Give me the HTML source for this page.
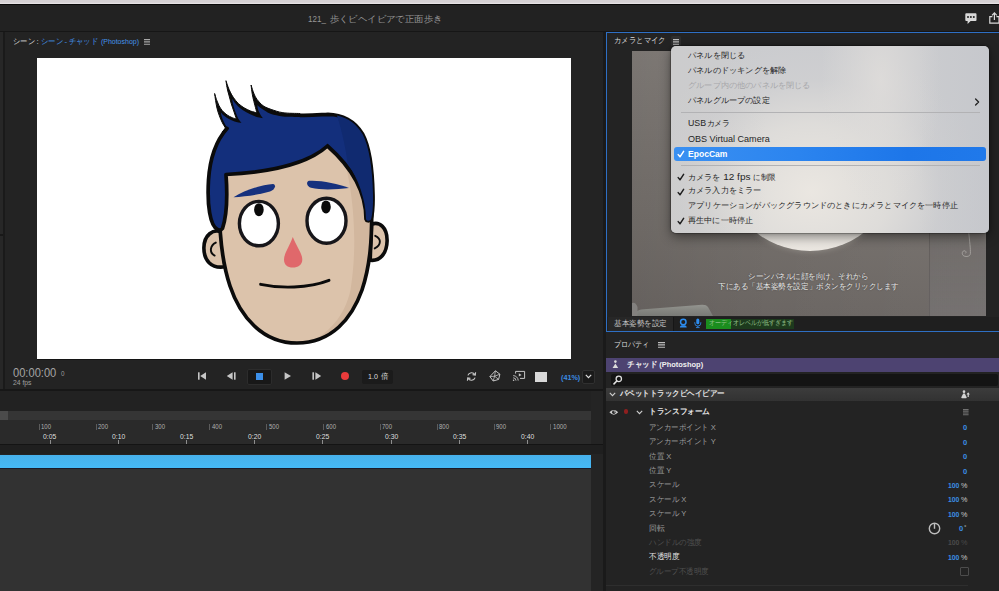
<!DOCTYPE html>
<html lang="ja">
<head>
<meta charset="utf-8">
<title>Character Animator</title>
<style>
html,body{margin:0;padding:0;}
body{width:999px;height:591px;overflow:hidden;background:#232323;position:relative;font-family:"Liberation Sans",sans-serif;color:#d0d0d0;font-size:8px;line-height:1;}
div,span{position:absolute;box-sizing:border-box;white-space:nowrap;}
svg{position:absolute;overflow:visible;}
svg.x{font-family:"Liberation Sans",sans-serif;}
</style>
</head>
<body>
<div style="left:0;top:0;width:999px;height:3.6px;background:linear-gradient(#d5d1d3 0%,#d5d1d3 55%,#ebe8ea 100%);"></div>
<div style="left:0;top:3.6px;width:999px;height:1.1px;background:#090909;"></div>
<div style="left:0;top:4.7px;width:999px;height:26.3px;background:#222222;"></div>
<div style="left:0;top:31px;width:999px;height:1px;background:#161616;"></div>
<svg class="x" style="left:307.5px;top:15.00px;" width="134.5" height="9.4"><text y="7.19"><tspan x="0.00" font-size="9.5" fill="#959595" textLength="17.9" lengthAdjust="spacingAndGlyphs">121_</tspan> <tspan x="21.50" font-size="9.4" fill="#959595" textLength="113" lengthAdjust="spacingAndGlyphs">歩くビヘイビアで正面歩き</tspan></text></svg>
<svg style="left:964.5px;top:12.8px" width="12" height="12" viewBox="0 0 12 12"><path d="M1.2 0.3 H10.6 Q11.5 0.3 11.5 1.2 V7 Q11.5 7.9 10.6 7.9 H5.6 L2.6 11 V7.9 H1.2 Q0.3 7.9 0.3 7 V1.2 Q0.3 0.3 1.2 0.3 Z" fill="#d9d9d9"/><circle cx="3" cy="4.1" r="1" fill="#222"/><circle cx="5.9" cy="4.1" r="1" fill="#222"/><circle cx="8.8" cy="4.1" r="1" fill="#222"/></svg>
<svg style="left:988.5px;top:12px" width="12" height="12" viewBox="0 0 12 12" fill="none" stroke="#d9d9d9" stroke-width="1.2"><path d="M3.4 4.6 H0.8 V11.2 H10 V4.6 H7.4"/><path d="M5.4 8 V1.2 M3 3.4 L5.4 0.9 L7.8 3.4"/></svg>
<div style="left:0;top:32px;width:2.5px;height:358px;background:#272727;"></div>
<div style="left:2.5px;top:32px;width:2.2px;height:358px;background:#1a1a1a;"></div>
<div style="left:0;top:234.3px;width:2.5px;height:1.6px;background:#181818;"></div>
<div style="left:37px;top:58px;width:534.2px;height:301px;background:#ffffff;box-shadow:0 1px 0 #141414;"></div>
<div style="left:0;top:389px;width:604px;height:2px;background:#171717;"></div>
<div style="left:603px;top:32px;width:3px;height:559px;background:#1a1a1a;"></div>
<svg class="x" style="left:12.7px;top:37.90px;" width="126.0" height="8"><text y="6.12"><tspan x="0.00" font-size="8" fill="#dadada" textLength="21.9" lengthAdjust="spacingAndGlyphs">シーン</tspan> <tspan x="23.50" font-size="8" fill="#dadada">:</tspan> <tspan x="27.90" font-size="8" fill="#4494ea" textLength="22.1" lengthAdjust="spacingAndGlyphs">シーン</tspan> <tspan x="51.60" font-size="8" fill="#4494ea">-</tspan> <tspan x="55.60" font-size="8" fill="#4494ea" textLength="29.6" lengthAdjust="spacingAndGlyphs">チャッド</tspan> <tspan x="87.90" font-size="8" fill="#4494ea" textLength="38.1" lengthAdjust="spacingAndGlyphs">(Photoshop)</tspan></text></svg>
<svg style="left:144px;top:39.2px" width="6" height="6" viewBox="0 0 6 6"><path d="M0 0.6H6M0 2.9H6M0 5.2H6" stroke="#a8a8a8" stroke-width="1.1"/></svg>
<svg id="face" style="left:0;top:0" width="999" height="591" viewBox="0 0 999 591">
  <defs><clipPath id="fc"><path id="facep" d="M219.5 200 C219 235 222 262 230 286 C240 316 262 343 297 343 C332 343 352 318 362 290 C370 266 372.5 240 371.5 200 C371 170 350 140 297 140 C240 140 220 170 219.5 200 Z"/></clipPath></defs>
  <!-- ears -->
  <path d="M221.5 232 C213 228.5 204.2 235 203.9 247.5 C203.6 260 211 269 225 266.8 Z" fill="#dcc3ab" stroke="#0b0b0b" stroke-width="3.6" stroke-linejoin="round"/>
  <path d="M215.8 242.6 C210 245.5 209 252.5 214.6 255.6" fill="none" stroke="#0b0b0b" stroke-width="1.9" stroke-linecap="round"/>
  <path d="M371.5 224.3 C379.5 221 387.4 227.5 387.1 241 C386.8 253.5 380 261.5 370.2 260.2 Z" fill="#dcc3ab" stroke="#0b0b0b" stroke-width="3.6" stroke-linejoin="round"/>
  <path d="M375.2 235.8 C381.5 238.5 381.5 245 374.7 248.4" fill="none" stroke="#0b0b0b" stroke-width="1.9" stroke-linecap="round"/>
  <!-- face -->
  <use href="#facep" fill="#dcc3ab"/>
  <g clip-path="url(#fc)"><path d="M338 140 C350 170 360 230 350.5 290 C344 320 324 338 300 346 L380 346 L380 140 Z" fill="#d2b79e"/></g>
  <use href="#facep" fill="none" stroke="#0b0b0b" stroke-width="3.7"/>
  <!-- hair -->
  <path d="M222.2 132.0 C222.8 131.4 225.0 128.8 225.5 128.1 C225.0 127.2 223.2 124.5 222.2 122.4 C221.2 120.4 220.2 118.2 219.4 115.8 C218.5 113.4 217.6 110.8 217.0 108.2 C216.4 105.7 216.0 103.1 215.6 100.6 C215.2 98.2 214.8 94.7 214.6 93.5 C215.0 94.6 215.8 97.7 216.5 99.7 C217.2 101.7 218.0 103.6 218.9 105.4 C219.8 107.2 220.9 109.0 222.2 110.6 C223.6 112.2 225.3 113.7 227.0 114.9 C228.6 116.0 230.6 117.0 232.2 117.7 C233.8 118.4 235.7 118.7 236.4 118.8 C236.0 117.7 234.9 114.6 234.1 112.0 C233.2 109.5 232.1 106.3 231.2 103.5 C230.4 100.6 229.6 97.6 228.9 95.0 C228.1 92.3 227.4 89.7 227.0 87.4 C226.5 85.0 226.2 81.8 226.0 80.7 C226.3 81.7 227.2 84.5 227.9 86.4 C228.6 88.3 229.3 90.2 230.3 92.1 C231.2 94.0 232.2 95.9 233.6 97.8 C234.9 99.7 236.6 101.8 238.3 103.5 C240.1 105.1 242.0 106.5 244.0 107.8 C246.1 109.0 248.5 110.2 250.7 111.1 C252.8 111.9 255.8 112.5 256.8 112.8 C256.5 111.5 255.6 107.9 254.9 105.4 C254.3 102.9 253.5 100.2 253.0 97.8 C252.5 95.4 252.1 93.3 251.8 91.2 C251.5 89.0 251.2 86.0 251.1 85.0 C251.4 86.0 252.3 89.2 253.0 91.2 C253.7 93.1 254.4 95.0 255.4 96.9 C256.4 98.7 257.8 100.5 259.2 102.1 C260.6 103.6 261.9 105.1 263.9 106.3 C265.9 107.5 268.0 108.3 271.1 109.4 C274.3 110.4 278.1 112.0 282.9 112.7 C287.7 113.4 297.1 113.4 299.9 113.5 L299.9 123.4 L230.7 137.6 Z" fill="#0b0b0b" stroke="#0b0b0b" stroke-width="1" stroke-linejoin="miter" stroke-miterlimit="8"/>
  <path d="M228.9 128.6 C228.4 128.1 227.0 127.1 226.0 125.8 C225.1 124.4 224.0 122.4 223.2 120.5 C222.4 118.7 221.7 116.2 221.3 114.9 C220.9 113.5 220.9 112.9 220.8 112.5 C221.3 113.0 222.8 114.7 224.1 115.8 C225.5 116.9 227.1 118.2 228.9 119.1 C230.6 120.1 232.4 120.8 234.5 121.5 C236.7 122.2 240.5 122.8 241.6 123.1 C241.1 122.4 239.4 120.5 238.3 118.7 C237.3 116.8 236.4 114.4 235.5 112.0 C234.6 109.6 233.7 106.6 233.1 104.4 C232.6 102.2 232.3 99.7 232.2 98.7 C232.7 99.5 234.1 101.9 235.5 103.5 C236.8 105.1 238.5 106.8 240.2 108.2 C242.0 109.6 243.9 110.8 245.9 112.0 C248.0 113.2 250.3 114.4 252.5 115.3 C254.8 116.3 257.4 117.0 259.2 117.5 C260.9 118.0 262.3 118.1 263.0 118.2 C262.6 117.6 261.4 116.2 260.6 114.9 C259.8 113.5 258.8 111.8 258.2 110.1 C257.7 108.5 257.4 105.8 257.3 104.9 C257.9 105.5 259.7 107.2 261.1 108.2 C262.5 109.3 264.1 110.3 265.8 111.3 C267.5 112.2 268.3 113.2 271.1 114.1 C274.0 115.0 278.1 116.0 282.9 116.5 C287.7 116.9 297.1 116.9 299.9 116.9 L300 115.3 C312 115.6 320 114.7 328 114.3 C342 114.5 355 121 362.5 134 C369 146 372.5 168 373 195 C373.2 205 372.6 214 371 219.5 C369 221.5 366.5 221 366 219 C366 198 357 172 327.5 146 C312 160 280 172 226 174.5 C227.5 195 227 215 222.5 228.5 C221 230.5 219 230.3 217.5 229.5 C210 226 207 205 208.5 180 C210 157 217.5 139 227 128.4 Z" fill="#132f7c"/>
  <path d="M300 115.3 C312 115.6 320 114.7 328 114.3 C342 114.5 355 121 362.5 134 C369 146 372.5 168 373 195 C373.2 205 372.6 214 371 219.5 C369 221.5 366.5 221 366 219 C366 198 357 172 327.5 146 C312 160 280 172 226 174.5 C227.5 195 227 215 222.5 228.5 C221 230.5 219 230.3 217.5 229.5 C210 226 207 205 208.5 180 C210 157 217.5 139 227 128.4" fill="none" stroke="#0b0b0b" stroke-width="3.7" stroke-linejoin="round" stroke-linecap="round"/>
  <path d="M327.5 143.6 L324.8 147.4 L330.4 147.6 Z" fill="#0b0b0b"/>
  <path d="M337 115.5 C343 135 346 150 347.5 163 C358 178 366 200 366 219 C366.5 221 369 221.5 371 219.5 C372.6 214 373.2 205 373 195 C372.5 168 369 146 362.5 134 C357 125 349 118 337 115.5 Z" fill="#102a70"/>
  <!-- brows -->
  <path d="M233.5 197.3 C245 190 262 184.5 273 184 C277 185 274.5 190 270 191.5 C258 195 245 196.5 233.5 197.3 Z" fill="#16317e"/>
  <path d="M349 188 C338 183.5 320 180 309 180.8 C305.5 182 307 186.5 311 187.8 C322 190.5 337 189.5 349 188 Z" fill="#16317e"/>
  <!-- eyes -->
  <ellipse cx="258.9" cy="223.6" rx="19.5" ry="22.2" fill="#ffffff" stroke="#17161a" stroke-width="3.4"/>
  <ellipse cx="326.5" cy="220.7" rx="19.5" ry="22.5" fill="#ffffff" stroke="#17161a" stroke-width="3.4"/>
  <ellipse cx="258.9" cy="209.7" rx="4.8" ry="6.5" fill="#0a0a0a"/>
  <ellipse cx="326" cy="206.9" rx="4.8" ry="6.5" fill="#0a0a0a"/>
  <!-- nose -->
  <path d="M292.8 237 C297 247 302.3 254 302.3 259.5 C302.3 265 298 267.5 292.8 267.5 C287.5 267.5 284 265 284 259.5 C284 254 289 247 292.8 237 Z" fill="#e0686b"/>
  <!-- mouth -->
  <path d="M260.6 284.3 C280 288.5 308 288.5 329 280.3" fill="none" stroke="#0b0b0b" stroke-width="2.9" stroke-linecap="round"/>
</svg>
<svg class="x" style="left:12.9px;top:366.90px;" width="43.3" height="12.6"><text y="10.39" font-size="12.6" fill="#a4a4a4" textLength="43.3" lengthAdjust="spacingAndGlyphs" x="0">00:00:00</text></svg>
<svg class="x" style="left:61.4px;top:371.45px;" width="4.4" height="6.3"><text y="5.20" font-size="6.3" fill="#9c9c9c" x="0">0</text></svg>
<svg class="x" style="left:13px;top:379.10px;" width="18.5" height="7.4"><text y="6.10" font-size="7.4" fill="#a0a0a0" textLength="18.5" lengthAdjust="spacingAndGlyphs" x="0">24 fps</text></svg>
<svg style="left:197px;top:371px" width="10" height="10" viewBox="0 0 10 10"><rect x="1" y="1.3" width="1.6" height="7.4" fill="#c6c6c6"/><path d="M9 1.3 L9 8.7 L3.2 5 Z" fill="#c6c6c6"/></svg>
<svg style="left:226px;top:371px" width="11" height="10" viewBox="0 0 11 10"><path d="M6.6 1.3 L6.6 8.7 L0.8 5 Z" fill="#c6c6c6"/><rect x="8" y="1.3" width="1.6" height="7.4" fill="#c6c6c6"/></svg>
<div style="left:247px;top:368.5px;width:25px;height:16.5px;background:#181818;border-radius:2px;border:1px solid #2c2c2c;"></div>
<div style="left:255.5px;top:372.5px;width:7px;height:7px;background:#3b8fe9;"></div>
<svg style="left:283px;top:371px" width="10" height="10" viewBox="0 0 10 10"><path d="M1.6 1.2 L1.6 8.8 L8 5 Z" fill="#c6c6c6"/></svg>
<svg style="left:311px;top:371px" width="11" height="10" viewBox="0 0 11 10"><rect x="1.4" y="1.3" width="1.6" height="7.4" fill="#c6c6c6"/><path d="M4.4 1.3 L4.4 8.7 L10.2 5 Z" fill="#c6c6c6"/></svg>
<div style="left:341.3px;top:372.3px;width:8px;height:8px;border-radius:50%;background:#ea3b3b;"></div>
<div style="left:362px;top:370px;width:31px;height:13.5px;background:#1b1b1b;border-radius:2px;"></div>
<svg class="x" style="left:367.6px;top:372.80px;" width="20.1" height="8"><text y="6.12"><tspan x="0.00" font-size="8" fill="#dcdcdc" textLength="9.9" lengthAdjust="spacingAndGlyphs">1.0</tspan> <tspan x="12.70" font-size="7.6" fill="#dcdcdc" textLength="7.4" lengthAdjust="spacingAndGlyphs">倍</tspan></text></svg>
<svg style="left:466px;top:371px" width="11" height="11" viewBox="0 0 11 11" fill="none" stroke="#c6c6c6" stroke-width="1.15"><path d="M8.9 3.6 A3.9 3.9 0 0 0 1.9 4.4"/><path d="M2.1 7.4 A3.9 3.9 0 0 0 9.1 6.6"/><path d="M9.6 1.2 L9.3 4 L6.6 3.6" stroke-width="1.1"/><path d="M1.4 9.8 L1.7 7 L4.4 7.4" stroke-width="1.1"/></svg>
<svg style="left:489px;top:370px" width="12" height="12" viewBox="0 0 12 12" fill="none" stroke="#c6c6c6" stroke-width="1"><path d="M6.4 0.8 L10.9 4.2 L9.6 9.4 L4.2 11 L0.9 6.6 Z"/><path d="M6.4 0.8 L5.6 6.2 L0.9 6.6 M5.6 6.2 L10.9 4.2 M5.6 6.2 L4.2 11 M5.6 6.2 L9.6 9.4" stroke-width="0.8"/></svg>
<svg style="left:512px;top:370px" width="14" height="12" viewBox="0 0 14 12" fill="none" stroke="#c6c6c6" stroke-width="1"><path d="M3.6 3.6 V1.4 H12.6 V8.4 H8"/><path d="M6.8 3.2 L9.6 4.9 L6.8 6.6 Z" fill="#c6c6c6" stroke="none"/><path d="M1.2 5.6 A5 5 0 0 1 6.2 10.6" stroke-width="0.9"/><path d="M1.2 7.8 A2.8 2.8 0 0 1 4 10.6" stroke-width="0.9"/><circle cx="1.6" cy="10.2" r="0.8" fill="#c6c6c6" stroke="none"/></svg>
<div style="left:535px;top:371.5px;width:12px;height:10px;background:#d9d9d9;"></div>
<div style="left:581.5px;top:370px;width:13px;height:13.5px;background:#1a1a1a;border:1px solid #303030;border-radius:2px;"></div>
<svg style="left:584.5px;top:374px" width="7" height="5" viewBox="0 0 7 5" fill="none" stroke="#e0e0e0" stroke-width="1.2"><path d="M0.8 0.9 L3.5 3.6 L6.2 0.9"/></svg>
<svg class="x" style="left:560.7px;top:372.80px;" width="19.2" height="8"><text y="6.60" font-size="8" fill="#3b8de3" font-weight="bold" textLength="19.2" lengthAdjust="spacingAndGlyphs" x="0">(41%)</text></svg>
<div style="left:0;top:391px;width:603px;height:20px;background:#222222;"></div>
<div style="left:0;top:410.5px;width:591px;height:9.5px;background:#353535;"></div>
<div style="left:0;top:410.5px;width:8px;height:9.5px;background:#4b4b4b;"></div>
<div style="left:0;top:420px;width:591px;height:24.5px;background:#2a2a2a;"></div>
<div style="left:591px;top:391px;width:12px;height:200px;background:#242424;"></div>
<div style="left:38.7px;top:424px;width:1px;height:5.5px;background:#5c5c5c;"></div>
<svg class="x" style="left:41.3px;top:424.00px;" width="10" height="6.4"><text y="5.28" font-size="6.4" fill="#b0b0b0" textLength="10" lengthAdjust="spacingAndGlyphs" x="0">100</text></svg>
<div style="left:95.5px;top:424px;width:1px;height:5.5px;background:#5c5c5c;"></div>
<svg class="x" style="left:98.1px;top:424.00px;" width="10" height="6.4"><text y="5.28" font-size="6.4" fill="#b0b0b0" textLength="10" lengthAdjust="spacingAndGlyphs" x="0">200</text></svg>
<div style="left:152.4px;top:424px;width:1px;height:5.5px;background:#5c5c5c;"></div>
<svg class="x" style="left:155.0px;top:424.00px;" width="10" height="6.4"><text y="5.28" font-size="6.4" fill="#b0b0b0" textLength="10" lengthAdjust="spacingAndGlyphs" x="0">300</text></svg>
<div style="left:209.2px;top:424px;width:1px;height:5.5px;background:#5c5c5c;"></div>
<svg class="x" style="left:211.8px;top:424.00px;" width="10" height="6.4"><text y="5.28" font-size="6.4" fill="#b0b0b0" textLength="10" lengthAdjust="spacingAndGlyphs" x="0">400</text></svg>
<div style="left:266.1px;top:424px;width:1px;height:5.5px;background:#5c5c5c;"></div>
<svg class="x" style="left:268.7px;top:424.00px;" width="10" height="6.4"><text y="5.28" font-size="6.4" fill="#b0b0b0" textLength="10" lengthAdjust="spacingAndGlyphs" x="0">500</text></svg>
<div style="left:322.9px;top:424px;width:1px;height:5.5px;background:#5c5c5c;"></div>
<svg class="x" style="left:325.5px;top:424.00px;" width="10" height="6.4"><text y="5.28" font-size="6.4" fill="#b0b0b0" textLength="10" lengthAdjust="spacingAndGlyphs" x="0">600</text></svg>
<div style="left:379.8px;top:424px;width:1px;height:5.5px;background:#5c5c5c;"></div>
<svg class="x" style="left:382.4px;top:424.00px;" width="10" height="6.4"><text y="5.28" font-size="6.4" fill="#b0b0b0" textLength="10" lengthAdjust="spacingAndGlyphs" x="0">700</text></svg>
<div style="left:436.6px;top:424px;width:1px;height:5.5px;background:#5c5c5c;"></div>
<svg class="x" style="left:439.2px;top:424.00px;" width="10" height="6.4"><text y="5.28" font-size="6.4" fill="#b0b0b0" textLength="10" lengthAdjust="spacingAndGlyphs" x="0">800</text></svg>
<div style="left:493.5px;top:424px;width:1px;height:5.5px;background:#5c5c5c;"></div>
<svg class="x" style="left:496.1px;top:424.00px;" width="10" height="6.4"><text y="5.28" font-size="6.4" fill="#b0b0b0" textLength="10" lengthAdjust="spacingAndGlyphs" x="0">900</text></svg>
<div style="left:550.3px;top:424px;width:1px;height:5.5px;background:#5c5c5c;"></div>
<svg class="x" style="left:552.9px;top:424.00px;" width="13.6" height="6.4"><text y="5.28" font-size="6.4" fill="#b0b0b0" textLength="13.6" lengthAdjust="spacingAndGlyphs" x="0">1000</text></svg>
<div style="left:49.5px;top:440px;width:1px;height:4px;background:#8e8e8e;"></div>
<svg class="x" style="left:43.4px;top:432.70px;text-shadow:0 0 1px #000;" width="13.2" height="7.6"><text y="6.27" font-size="7.6" fill="#e6e6e6" textLength="13.2" lengthAdjust="spacingAndGlyphs" x="0">0:05</text></svg>
<div style="left:117.7px;top:440px;width:1px;height:4px;background:#8e8e8e;"></div>
<svg class="x" style="left:111.6px;top:432.70px;text-shadow:0 0 1px #000;" width="13.2" height="7.6"><text y="6.27" font-size="7.6" fill="#e6e6e6" textLength="13.2" lengthAdjust="spacingAndGlyphs" x="0">0:10</text></svg>
<div style="left:186.0px;top:440px;width:1px;height:4px;background:#8e8e8e;"></div>
<svg class="x" style="left:179.9px;top:432.70px;text-shadow:0 0 1px #000;" width="13.2" height="7.6"><text y="6.27" font-size="7.6" fill="#e6e6e6" textLength="13.2" lengthAdjust="spacingAndGlyphs" x="0">0:15</text></svg>
<div style="left:254.2px;top:440px;width:1px;height:4px;background:#8e8e8e;"></div>
<svg class="x" style="left:248.1px;top:432.70px;text-shadow:0 0 1px #000;" width="13.2" height="7.6"><text y="6.27" font-size="7.6" fill="#e6e6e6" textLength="13.2" lengthAdjust="spacingAndGlyphs" x="0">0:20</text></svg>
<div style="left:322.4px;top:440px;width:1px;height:4px;background:#8e8e8e;"></div>
<svg class="x" style="left:316.3px;top:432.70px;text-shadow:0 0 1px #000;" width="13.2" height="7.6"><text y="6.27" font-size="7.6" fill="#e6e6e6" textLength="13.2" lengthAdjust="spacingAndGlyphs" x="0">0:25</text></svg>
<div style="left:390.6px;top:440px;width:1px;height:4px;background:#8e8e8e;"></div>
<svg class="x" style="left:384.5px;top:432.70px;text-shadow:0 0 1px #000;" width="13.2" height="7.6"><text y="6.27" font-size="7.6" fill="#e6e6e6" textLength="13.2" lengthAdjust="spacingAndGlyphs" x="0">0:30</text></svg>
<div style="left:458.8px;top:440px;width:1px;height:4px;background:#8e8e8e;"></div>
<svg class="x" style="left:452.7px;top:432.70px;text-shadow:0 0 1px #000;" width="13.2" height="7.6"><text y="6.27" font-size="7.6" fill="#e6e6e6" textLength="13.2" lengthAdjust="spacingAndGlyphs" x="0">0:35</text></svg>
<div style="left:527.1px;top:440px;width:1px;height:4px;background:#8e8e8e;"></div>
<svg class="x" style="left:521.0px;top:432.70px;text-shadow:0 0 1px #000;" width="13.2" height="7.6"><text y="6.27" font-size="7.6" fill="#e6e6e6" textLength="13.2" lengthAdjust="spacingAndGlyphs" x="0">0:40</text></svg>
<div style="left:0;top:444px;width:603px;height:1.2px;background:#141414;"></div>
<div style="left:0;top:445.2px;width:603px;height:9.3px;background:#1f1f1f;"></div>
<div style="left:0;top:454.5px;width:591px;height:14px;background:linear-gradient(#47b0ea,#45baf8);"></div>
<div style="left:0;top:468.5px;width:591px;height:123px;background:#323232;"></div>
<div style="left:0;top:468px;width:591px;height:1px;background:#1a1a2a;"></div>
<div style="left:606px;top:32px;width:393px;height:300px;background:#232323;border:1.9px solid #2e6fc4;border-right:none;"></div>
<div style="left:670.5px;top:36px;width:10px;height:10px;background:#2e2e2e;border-radius:1.5px;"></div>
<svg style="left:673px;top:38.5px" width="6" height="6" viewBox="0 0 6 6"><path d="M0 0.6H6M0 2.9H6M0 5.2H6" stroke="#bdbdbd" stroke-width="1.1"/></svg>
<div style="left:632px;top:51px;width:353.5px;height:265px;overflow:hidden;background:linear-gradient(180deg,#827d79 0%,#7a7571 35%,#746f6b 65%,#6b6663 100%);">
  <div style="left:0;top:0;width:353.5px;height:265px;background:linear-gradient(90deg,rgba(0,0,0,0.06) 0%,rgba(0,0,0,0) 40%,rgba(255,255,255,0.03) 100%);"></div>
  <div style="left:296.5px;top:0;width:57px;height:265px;background:linear-gradient(180deg,rgba(60,62,72,0.10) 0%,rgba(60,62,72,0.08) 70%,rgba(160,165,180,0.12) 100%);border-left:1px solid rgba(40,36,34,0.18);"></div>
  <div style="left:90px;top:23.5px;width:176px;height:176px;border-radius:50%;background:radial-gradient(circle at 50% 55%,#f1eee9 0%,#e9e5df 70%,#dcd7d0 100%);box-shadow:0 0 6px rgba(255,250,240,0.25);"></div>
  <svg style="left:0;top:0" width="354" height="265" viewBox="0 0 354 265">
    <defs><linearGradient id="fg" x1="0" y1="0" x2="0" y2="1"><stop offset="0" stop-color="#9b9d98"/><stop offset="0.45" stop-color="#8b8d88"/><stop offset="1" stop-color="#7c7e7a"/></linearGradient></defs>
    <path d="M0 252 Q3.5 250.5 5.5 256 V265 H0 Z" fill="#8b8a87" opacity=".8"/>
    <path d="M5 260.5 Q6 258.8 12 258.2 L70 253.8 Q74.5 253.6 76 256 L81 265 H5 Z" fill="url(#fg)" opacity=".85"/>
    <path d="M336.8 182 C337.6 190 338.6 198 338.4 202.5 C338.2 205.5 334.5 206 332 205 C329.8 204 329.6 200.5 332 199.8 C334 199.4 334.6 201.6 333.4 202.4" fill="none" stroke="#b3b0ac" stroke-width="0.9" opacity=".8"/>
  </svg>
</div>
<svg class="x" style="left:614px;top:37.20px;" width="51.7" height="8"><text y="6.12" font-size="8" fill="#dadada" textLength="51.7" lengthAdjust="spacingAndGlyphs" x="0">カメラとマイク</text></svg>
<svg class="x" style="left:748.4px;top:273.00px;text-shadow:0 0 1.5px rgba(0,0,0,.6);" width="120.4" height="8"><text y="6.12" font-size="8" fill="#ececec" textLength="120.4" lengthAdjust="spacingAndGlyphs" x="0">シーンパネルに顔を向け、それから</text></svg>
<svg class="x" style="left:718.1px;top:283.40px;text-shadow:0 0 1.5px rgba(0,0,0,.6);" width="181" height="8"><text y="6.12" font-size="8" fill="#ececec" textLength="181" lengthAdjust="spacingAndGlyphs" x="0">下にある「基本姿勢を設定」ボタンをクリックします</text></svg>
<div style="left:607.4px;top:316.5px;width:391.6px;height:14px;background:#1f1f1f;"></div>
<div style="left:608px;top:317px;width:66px;height:13.5px;background:#272727;border-right:1px solid #161616;"></div>
<svg style="left:678.5px;top:318.4px" width="8.6" height="10.3" viewBox="0 0 10 12"><circle cx="5" cy="4.6" r="3.2" fill="none" stroke="#2d8df0" stroke-width="1.7"/><path d="M1 11.2 Q1 8.6 3.2 8.4 H6.8 Q9 8.6 9 11.2 Z" fill="#2d8df0"/></svg>
<svg style="left:693.8px;top:318.4px" width="7.6" height="10.1" viewBox="0 0 9 12"><rect x="2.7" y="0.5" width="3.6" height="7" rx="1.8" fill="#2d8df0"/><path d="M0.9 5 V6 A3.6 3.6 0 0 0 8.1 6 V5" fill="none" stroke="#2d8df0" stroke-width="1"/><path d="M4.5 9.6 V11.4 M2.3 11.4 H6.7" stroke="#2d8df0" stroke-width="1"/></svg>
<div style="left:706px;top:319px;width:88px;height:9.8px;background:#1d3a1d;"></div>
<div style="left:706px;top:319px;width:25px;height:9.8px;background:#1b8d1e;"></div>
<svg class="x" style="left:614px;top:320.00px;" width="53" height="8"><text y="6.12" font-size="8" fill="#c4c4c4" textLength="53" lengthAdjust="spacingAndGlyphs" x="0">基本姿勢を設定</text></svg>
<svg class="x" style="left:709.3px;top:319.80px;" width="84.5" height="7"><text y="5.36" font-size="7" fill="#8fbf86" textLength="84.5" lengthAdjust="spacingAndGlyphs" x="0">オーディオレベルが低すぎます</text></svg>
<div style="left:606px;top:332.4px;width:393px;height:259px;background:#232323;"></div>
<svg style="left:657.5px;top:341.5px" width="7" height="6" viewBox="0 0 7 6"><path d="M0 0.6H7M0 2.9H7M0 5.2H7" stroke="#bdbdbd" stroke-width="1.1"/></svg>
<div style="left:606px;top:358px;width:393px;height:14.2px;background:#4d4371;"></div>
<svg style="left:612.4px;top:360px" width="6.8" height="8.5" viewBox="0 0 8 10"><circle cx="4" cy="1.9" r="1.5" fill="#dcdcdc"/><path d="M4 4 L7.3 9.4 H0.7 Z" fill="#dcdcdc"/></svg>
<div style="left:610.5px;top:373.6px;width:387.5px;height:12.4px;background:#141414;border-radius:2px;"></div>
<svg style="left:613px;top:375px" width="10" height="10" viewBox="0 0 10 10" fill="none" stroke="#e0e0e0"><circle cx="5.8" cy="3.9" r="2.7" stroke-width="1.3"/><path d="M3.8 6 L1 8.9" stroke-width="1.6" stroke-linecap="round"/></svg>
<div style="left:606px;top:387.8px;width:393px;height:13px;background:linear-gradient(#3c3c3c,#323232);"></div>
<svg style="left:608.6px;top:392px" width="7" height="5" viewBox="0 0 7 5" fill="none" stroke="#d0d0d0" stroke-width="1.1"><path d="M0.8 0.9 L3.5 3.6 L6.2 0.9"/></svg>
<svg style="left:961px;top:389.5px" width="9" height="9" viewBox="0 0 9 9"><circle cx="3" cy="1.7" r="1.35" fill="#d4d4d4"/><path d="M3 3 Q4 3.6 5.7 7.3 Q5.9 8.3 4.9 8.3 H1.1 Q0.1 8.3 0.3 7.3 Q2 3.6 3 3 Z" fill="#d4d4d4"/><path d="M7.2 6.9 V3.2" stroke="#d4d4d4" stroke-width="1.2" fill="none"/><path d="M5.5 4.5 L7.2 2.2 L8.9 4.5 Z" fill="#d4d4d4"/></svg>
<svg style="left:608.8px;top:409px" width="9.6" height="6.7" viewBox="0 0 10 7"><path d="M0.4 3.5 Q5 -1.6 9.6 3.5 Q5 8.6 0.4 3.5 Z" fill="#cdcdcd"/><circle cx="5" cy="3.5" r="1.8" fill="#232323"/><circle cx="5.6" cy="3" r="0.7" fill="#cdcdcd"/></svg>
<div style="left:623.6px;top:409.3px;width:4.4px;height:4.4px;border-radius:50%;background:#8f1f1f;"></div>
<svg style="left:636px;top:410px" width="7" height="5" viewBox="0 0 7 5" fill="none" stroke="#d0d0d0" stroke-width="1.1"><path d="M0.8 0.9 L3.5 3.6 L6.2 0.9"/></svg>
<svg style="left:962.7px;top:409.3px" width="5.6" height="6.4" viewBox="0 0 5.6 6.4"><path d="M0 0.6H5.6M0 2.3H5.6M0 4H5.6M0 5.7H5.6" stroke="#727272" stroke-width="1.1"/></svg>
<svg class="x" style="left:614.2px;top:340.90px;" width="35.5" height="8"><text y="6.12" font-size="8" fill="#dadada" textLength="35.5" lengthAdjust="spacingAndGlyphs" x="0">プロパティ</text></svg>
<svg class="x" style="left:627.4px;top:361.30px;" width="76.2" height="8"><text y="6.12"><tspan x="0.00" font-size="8" fill="#f0f0f0" font-weight="bold" textLength="30" lengthAdjust="spacingAndGlyphs">チャッド</tspan> <tspan x="32.20" font-size="8" fill="#f0f0f0" font-weight="bold" textLength="44" lengthAdjust="spacingAndGlyphs">(Photoshop)</tspan></text></svg>
<svg class="x" style="left:620.3px;top:390.30px;" width="104.6" height="8"><text y="6.12" font-size="8" fill="#e6e6e6" font-weight="bold" textLength="104.6" lengthAdjust="spacingAndGlyphs" x="0">パペットトラックビヘイビアー</text></svg>
<svg class="x" style="left:648.6px;top:408.30px;" width="61" height="8"><text y="6.12" font-size="8" fill="#e8e8e8" font-weight="bold" textLength="61" lengthAdjust="spacingAndGlyphs" x="0">トランスフォーム</text></svg>
<svg class="x" style="left:649.3px;top:423.90px;" width="67.0" height="8"><text y="6.12"><tspan x="0.00" font-size="8" fill="#9e9e9e" textLength="59.5" lengthAdjust="spacingAndGlyphs">アンカーポイント</tspan> <tspan x="61.70" font-size="7.6" fill="#9e9e9e">X</tspan></text></svg>
<svg class="x" style="left:963.2px;top:424.45px;" width="4.2" height="7.5"><text y="6.19" font-size="7.5" fill="#3b8de3" font-weight="bold" textLength="4.2" lengthAdjust="spacingAndGlyphs" x="0">0</text></svg>
<svg class="x" style="left:649.3px;top:438.30px;" width="67.0" height="8"><text y="6.12"><tspan x="0.00" font-size="8" fill="#9e9e9e" textLength="59.5" lengthAdjust="spacingAndGlyphs">アンカーポイント</tspan> <tspan x="61.70" font-size="7.6" fill="#9e9e9e">Y</tspan></text></svg>
<svg class="x" style="left:963.2px;top:438.85px;" width="4.2" height="7.5"><text y="6.19" font-size="7.5" fill="#3b8de3" font-weight="bold" textLength="4.2" lengthAdjust="spacingAndGlyphs" x="0">0</text></svg>
<svg class="x" style="left:649.3px;top:452.60px;" width="22.5" height="8"><text y="6.12"><tspan x="0.00" font-size="8" fill="#9e9e9e" textLength="15" lengthAdjust="spacingAndGlyphs">位置</tspan> <tspan x="17.20" font-size="7.6" fill="#9e9e9e">X</tspan></text></svg>
<svg class="x" style="left:963.2px;top:453.15px;" width="4.2" height="7.5"><text y="6.19" font-size="7.5" fill="#3b8de3" font-weight="bold" textLength="4.2" lengthAdjust="spacingAndGlyphs" x="0">0</text></svg>
<svg class="x" style="left:649.3px;top:467.00px;" width="22.5" height="8"><text y="6.12"><tspan x="0.00" font-size="8" fill="#9e9e9e" textLength="15" lengthAdjust="spacingAndGlyphs">位置</tspan> <tspan x="17.20" font-size="7.6" fill="#9e9e9e">Y</tspan></text></svg>
<svg class="x" style="left:963.2px;top:467.55px;" width="4.2" height="7.5"><text y="6.19" font-size="7.5" fill="#3b8de3" font-weight="bold" textLength="4.2" lengthAdjust="spacingAndGlyphs" x="0">0</text></svg>
<svg class="x" style="left:649.3px;top:481.40px;" width="30.0" height="8"><text y="6.12"><tspan x="0.00" font-size="8" fill="#9e9e9e" textLength="30" lengthAdjust="spacingAndGlyphs">スケール</tspan></text></svg>
<svg class="x" style="left:948.2px;top:481.95px;" width="19.3" height="7.5"><text y="6.19"><tspan x="0.00" font-size="7.5" fill="#3b8de3" font-weight="bold" textLength="11.4" lengthAdjust="spacingAndGlyphs">100</tspan> <tspan x="12.90" font-size="7.5" fill="#c8c8c8" textLength="6.4" lengthAdjust="spacingAndGlyphs">%</tspan></text></svg>
<svg class="x" style="left:649.3px;top:495.80px;" width="37.5" height="8"><text y="6.12"><tspan x="0.00" font-size="8" fill="#9e9e9e" textLength="30" lengthAdjust="spacingAndGlyphs">スケール</tspan> <tspan x="32.20" font-size="7.6" fill="#9e9e9e">X</tspan></text></svg>
<svg class="x" style="left:948.2px;top:496.35px;" width="19.3" height="7.5"><text y="6.19"><tspan x="0.00" font-size="7.5" fill="#3b8de3" font-weight="bold" textLength="11.4" lengthAdjust="spacingAndGlyphs">100</tspan> <tspan x="12.90" font-size="7.5" fill="#c8c8c8" textLength="6.4" lengthAdjust="spacingAndGlyphs">%</tspan></text></svg>
<svg class="x" style="left:649.3px;top:510.10px;" width="37.5" height="8"><text y="6.12"><tspan x="0.00" font-size="8" fill="#9e9e9e" textLength="30" lengthAdjust="spacingAndGlyphs">スケール</tspan> <tspan x="32.20" font-size="7.6" fill="#9e9e9e">Y</tspan></text></svg>
<svg class="x" style="left:948.2px;top:510.65px;" width="19.3" height="7.5"><text y="6.19"><tspan x="0.00" font-size="7.5" fill="#3b8de3" font-weight="bold" textLength="11.4" lengthAdjust="spacingAndGlyphs">100</tspan> <tspan x="12.90" font-size="7.5" fill="#c8c8c8" textLength="6.4" lengthAdjust="spacingAndGlyphs">%</tspan></text></svg>
<svg class="x" style="left:649.3px;top:524.50px;" width="15.6" height="8"><text y="6.12"><tspan x="0.00" font-size="8" fill="#9e9e9e" textLength="15.6" lengthAdjust="spacingAndGlyphs">回転</tspan></text></svg>
<svg class="x" style="left:959.3px;top:525.05px;" width="4.2" height="7.5"><text y="6.19" font-size="7.5" fill="#3b8de3" font-weight="bold" textLength="4.2" lengthAdjust="spacingAndGlyphs" x="0">0</text></svg>
<svg class="x" style="left:964.3px;top:524.00px;" width="4.2" height="6"><text y="4.95" font-size="6" fill="#c8c8c8" x="0">°</text></svg>
<svg class="x" style="left:649.3px;top:538.90px;" width="52.7" height="8"><text y="6.12"><tspan x="0.00" font-size="8" fill="#505050" textLength="52.7" lengthAdjust="spacingAndGlyphs">ハンドルの強度</tspan></text></svg>
<svg class="x" style="left:948.2px;top:539.45px;" width="19.3" height="7.5"><text y="6.19"><tspan x="0.00" font-size="7.5" fill="#4a4a4a" font-weight="bold" textLength="11.4" lengthAdjust="spacingAndGlyphs">100</tspan> <tspan x="12.90" font-size="7.5" fill="#4a4a4a" textLength="6.4" lengthAdjust="spacingAndGlyphs">%</tspan></text></svg>
<svg class="x" style="left:649.3px;top:553.20px;" width="30.4" height="8"><text y="6.12"><tspan x="0.00" font-size="8" fill="#e2e2e2" textLength="30.4" lengthAdjust="spacingAndGlyphs">不透明度</tspan></text></svg>
<svg class="x" style="left:948.2px;top:553.75px;" width="19.3" height="7.5"><text y="6.19"><tspan x="0.00" font-size="7.5" fill="#3b8de3" font-weight="bold" textLength="11.4" lengthAdjust="spacingAndGlyphs">100</tspan> <tspan x="12.90" font-size="7.5" fill="#c8c8c8" textLength="6.4" lengthAdjust="spacingAndGlyphs">%</tspan></text></svg>
<svg class="x" style="left:649.3px;top:567.60px;" width="59.9" height="8"><text y="6.12"><tspan x="0.00" font-size="8" fill="#505050" textLength="59.9" lengthAdjust="spacingAndGlyphs">グループ不透明度</tspan></text></svg>
<svg style="left:927.5px;top:522.0px" width="13" height="13" viewBox="0 0 13 13" fill="none" stroke="#bdbdbd" stroke-width="1.4"><circle cx="6.5" cy="6.5" r="5.2"/><path d="M6.5 6.8 V2"/></svg>
<div style="left:959.5px;top:567.1px;width:9px;height:9px;border:1px solid #4c4c4c;border-radius:1px;"></div>
<div style="left:606px;top:585.3px;width:362px;height:1px;background:#2e2e2e;"></div>
<div style="left:670.7px;top:45.5px;width:318.8px;height:187px;border-radius:5px;background:#cbcccf;box-shadow:0 0 0 0.5px rgba(0,0,0,0.35),0 4px 12px rgba(0,0,0,0.45),0 0 3px rgba(0,0,0,0.3);overflow:hidden;">
  <div style="left:0;top:0;width:100%;height:100%;background:radial-gradient(ellipse 175px 150px at 44% 78%,rgba(236,232,226,0.95) 0%,rgba(230,227,222,0.7) 45%,rgba(214,213,213,0.3) 75%,rgba(203,204,207,0) 100%);"></div>
  <div style="left:0;top:0;width:100%;height:100%;background:radial-gradient(ellipse 60px 130px at 66% 18%,rgba(226,223,220,0.75) 0%,rgba(222,220,218,0.4) 55%,rgba(210,210,211,0) 100%);"></div>
  <div style="left:0;top:0;width:100%;height:100%;background:linear-gradient(90deg,rgba(205,204,203,0.5) 0%,rgba(205,204,203,0) 30%,rgba(196,198,203,0) 78%,rgba(196,198,203,0.7) 100%);"></div>
</div>
<div style="left:680.5px;top:112.3px;width:299.5px;height:1px;background:#b2b2b4;"></div>
<div style="left:680.5px;top:165px;width:299.5px;height:1px;background:#b2b2b4;"></div>
<div style="left:674.2px;top:146.6px;width:312px;height:14.8px;border-radius:3px;background:linear-gradient(90deg,#3a90f2 0%,#2b84ef 40%,#1d76e9 75%,#2079ea 100%);"></div>
<svg style="left:973.5px;top:97.5px" width="6" height="8" viewBox="0 0 6 8" fill="none" stroke="#222" stroke-width="1.3" stroke-linecap="round" stroke-linejoin="round"><path d="M1.6 1 L4.6 4 L1.6 7"/></svg>
<svg class="x" style="left:687.7px;top:51.90px;" width="57.2" height="8.2"><text y="6.27" font-size="8.2" fill="#252525" textLength="57.2" lengthAdjust="spacingAndGlyphs" x="0">パネルを閉じる</text></svg>
<svg class="x" style="left:687.7px;top:66.80px;" width="98.4" height="8.2"><text y="6.27" font-size="8.2" fill="#252525" textLength="98.4" lengthAdjust="spacingAndGlyphs" x="0">パネルのドッキングを解除</text></svg>
<svg class="x" style="left:687.7px;top:82.10px;" width="122.6" height="8.2"><text y="6.27" font-size="8.2" fill="#a7a7aa" textLength="122.6" lengthAdjust="spacingAndGlyphs" x="0">グループ内の他のパネルを閉じる</text></svg>
<svg class="x" style="left:687.7px;top:97.00px;" width="81.7" height="8.2"><text y="6.27" font-size="8.2" fill="#252525" textLength="81.7" lengthAdjust="spacingAndGlyphs" x="0">パネルグループの設定</text></svg>
<svg class="x" style="left:687.7px;top:119.30px;" width="42.2" height="8.6"><text y="6.58"><tspan x="0.00" font-size="9" fill="#252525" textLength="18.1" lengthAdjust="spacingAndGlyphs">USB</tspan><tspan x="18.50" font-size="8.2" fill="#252525" textLength="23.7" lengthAdjust="spacingAndGlyphs">カメラ</tspan></text></svg>
<svg class="x" style="left:687.7px;top:134.60px;" width="81.7" height="9"><text y="7.42" font-size="9" fill="#252525" textLength="81.7" lengthAdjust="spacingAndGlyphs" x="0">OBS Virtual Camera</text></svg>
<svg class="x" style="left:687.7px;top:149.60px;" width="39.4" height="9"><text y="7.42" font-size="9" fill="#ffffff" font-weight="bold" textLength="39.4" lengthAdjust="spacingAndGlyphs" x="0">EpocCam</text></svg>
<svg style="left:676.8px;top:150.1px" width="8" height="8" viewBox="0 0 8 8" fill="none" stroke="#fff" stroke-width="1.5" stroke-linecap="round" stroke-linejoin="round"><path d="M1.2 4.6 L3 6.8 L6.6 1.4"/></svg>
<svg class="x" style="left:687.7px;top:172.50px;" width="87.9" height="8.6"><text y="6.58"><tspan x="0.00" font-size="8.2" fill="#252525" textLength="32.6" lengthAdjust="spacingAndGlyphs">カメラを</tspan> <tspan x="35.20" font-size="9" fill="#252525" textLength="27.3" lengthAdjust="spacingAndGlyphs">12 fps</tspan> <tspan x="65.40" font-size="8.2" fill="#252525" textLength="22.5" lengthAdjust="spacingAndGlyphs">に制限</tspan></text></svg>
<svg style="left:676.8px;top:172.8px" width="8" height="8" viewBox="0 0 8 8" fill="none" stroke="#1e1e1e" stroke-width="1.5" stroke-linecap="round" stroke-linejoin="round"><path d="M1.2 4.6 L3 6.8 L6.6 1.4"/></svg>
<svg class="x" style="left:687.7px;top:187.40px;" width="73.2" height="8.2"><text y="6.27" font-size="8.2" fill="#252525" textLength="73.2" lengthAdjust="spacingAndGlyphs" x="0">カメラ入力をミラー</text></svg>
<svg style="left:676.8px;top:187.5px" width="8" height="8" viewBox="0 0 8 8" fill="none" stroke="#1e1e1e" stroke-width="1.5" stroke-linecap="round" stroke-linejoin="round"><path d="M1.2 4.6 L3 6.8 L6.6 1.4"/></svg>
<svg class="x" style="left:687.7px;top:202.40px;" width="270" height="8.2"><text y="6.27" font-size="8.2" fill="#252525" textLength="270" lengthAdjust="spacingAndGlyphs" x="0">アプリケーションがバックグラウンドのときにカメラとマイクを一時停止</text></svg>
<svg class="x" style="left:687.7px;top:217.20px;" width="65" height="8.2"><text y="6.27" font-size="8.2" fill="#252525" textLength="65" lengthAdjust="spacingAndGlyphs" x="0">再生中に一時停止</text></svg>
<svg style="left:676.8px;top:217.3px" width="8" height="8" viewBox="0 0 8 8" fill="none" stroke="#1e1e1e" stroke-width="1.5" stroke-linecap="round" stroke-linejoin="round"><path d="M1.2 4.6 L3 6.8 L6.6 1.4"/></svg>
</body>
</html>
